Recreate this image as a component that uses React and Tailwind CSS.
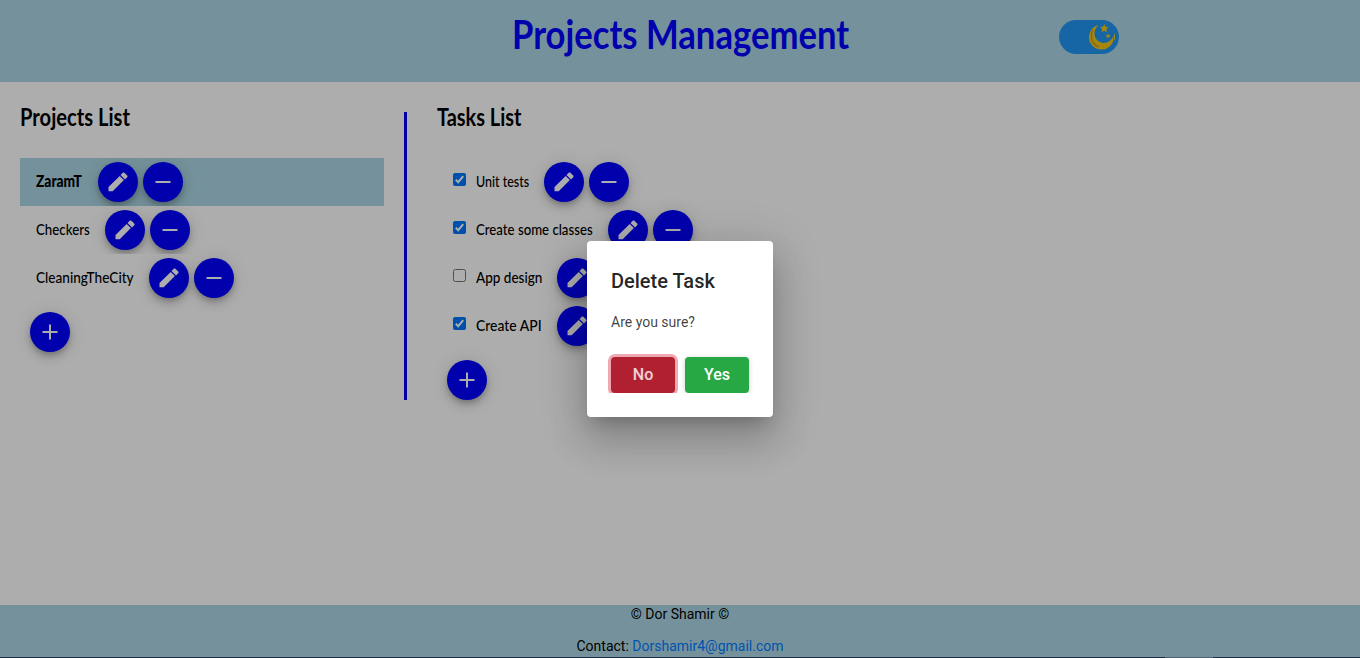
import React from "react";

const display = "font-['Lato','Open_Sans',sans-serif]";

function Fab({ icon }) {
  const paths = {
    edit: "M2.500 17.100V21.300h4.200L17.900 10.100l-4.200-4.200L2.500 17.100zM21.200 7.300c.5-.5.5-1.200 0-1.700l-2.800-2.800c-.5-.5-1.200-.5-1.700 0L14.500 5l4.500 4.500 2.200-2.200z",
    remove: "M19.500 13h-15v-2h15v2z",
    add: "M19.500 13h-6.500v6.500h-2v-6.500h-6.500v-2h6.500v-6.500h2v6.500h6.500v2z",
  };
  return (
    <button className="flex size-10 shrink-0 items-center justify-center rounded-full bg-[#0000ff] text-white shadow-[0_3px_5px_-1px_rgba(0,0,0,0.2),0_6px_10px_0_rgba(0,0,0,0.14),0_1px_18px_0_rgba(0,0,0,0.12)]">
      <svg viewBox="0 0 24 24" className="size-6 fill-current">
        <path d={paths[icon]} />
      </svg>
    </button>
  );
}

function Check({ on }) {
  return on ? (
    <span className="mb-[5px] mr-[10px] flex size-[13px] shrink-0 items-center justify-center rounded-[2px] bg-[#0075ff]">
      <svg viewBox="0 0 13 13" className="size-[13px]">
        <path d="M2.800 6.800 5.200 9.200 10.200 3.200" fill="none" stroke="#fff" strokeWidth="2" />
      </svg>
    </span>
  ) : (
    <span className="mb-[5px] mr-[10px] size-[13px] shrink-0 rounded-[2.5px] border border-[#767676] bg-white" />
  );
}

function Row({ label, width, squeeze, className = "", checked }) {
  return (
    <li className={"flex h-12 items-center pl-4 " + className}>
      {checked !== undefined && <Check on={checked} />}
      <span className={"shrink-0 whitespace-nowrap pb-[2px] " + width}>
        <span className={"inline-block origin-left " + squeeze}>{label}</span>
      </span>
      <span className="flex gap-[5px]">
        <Fab icon="edit" />
        <Fab icon="remove" />
      </span>
    </li>
  );
}

function ThemeToggle() {
  return (
    <div className="ml-[210px] mt-5 h-[34px] w-[60px] overflow-hidden rounded-full bg-[#2196f3]">
      <svg viewBox="0 0 60 34" className="h-[34px] w-[60px]">
        <path d="M39.500 5C31 7 27.500 17 32 24c4.800 7 15 7.400 20 1 2.100-2.500 2.900-5 2.300-8.500-2.800 5.600-9 8-14 5.300-6.200-3.400-6.500-11.600-.8-16.800z" fill="#f5c816" />
        <path d="M34 10c-3.500 7-1 14.500 6 17" fill="none" stroke="#c99a10" strokeWidth="1.500" />
        <path d="m45.300 4 1.200 2.700 3 .3-2.100 2.100.6 3-2.700-1.400-2.700 1.400.6-3L41.100 7l3-.3zM49 13.500l.8 1.500 1.700.2-1.200 1.200.3 1.700-1.600-.8-1.500.8.3-1.700-1.200-1.200 1.700-.2zM56 13l-1.600 4 1.600 4zM39 27h3l-1.500 2.500zM44 27h3l-1.500 2.500z" fill="#f5c816" />
      </svg>
    </div>
  );
}

export default function App() {
  return (
    <div className="grid h-[658px] w-[1360px] overflow-hidden bg-white text-black">
      <div className="col-start-1 row-start-1 flex h-[658px] flex-col font-['Roboto',sans-serif]">
        <header className="flex h-[82px] shrink-0 bg-[#add8e6]">
          <h1 className={"ml-[512px] mt-[10px] h-12 w-[337px] whitespace-nowrap text-[40px] leading-[48px] font-bold text-[#0000ff] " + display}>
            <span className="inline-block origin-left scale-x-[0.866]">Projects Management</span>
          </h1>
          <ThemeToggle />
        </header>

        <main className={"flex h-[523px] shrink-0 pl-5 pt-[30px] text-[16px] font-medium " + display}>
          <section className="h-[288px] w-[387px] border-r-[3px] border-[#0000ff] pr-5">
            <h2 className="-mt-[9px] h-[55px] text-[24px] leading-[28px] font-bold">
              <span className="inline-block origin-left scale-x-[0.84]">Projects List</span>
            </h2>
            <ul>
              <Row label="ZaramT" width="w-[62px] font-black" squeeze="scale-x-[0.86]" className="overflow-hidden bg-[#add8e6]" />
              <Row label="Checkers" width="w-[69px]" squeeze="scale-x-[0.83]" className="overflow-hidden" />
              <Row label="CleaningTheCity" width="w-[113px]" squeeze="scale-x-[0.85]" />
            </ul>
            <div className="pl-[10px] pt-[10px]">
              <Fab icon="add" />
            </div>
          </section>
          <section className="w-[400px] pl-[30px]">
            <h2 className="-mt-[9px] h-[55px] text-[24px] leading-[28px] font-bold">
              <span className="inline-block origin-left scale-x-[0.83]">Tasks List</span>
            </h2>
            <ul>
              <Row checked={true} label="Unit tests" width="w-[68px]" squeeze="scale-x-[0.78]" />
              <Row checked={true} label="Create some classes" width="w-[132px]" squeeze="scale-x-[0.825]" />
              <Row checked={false} label="App design" width="w-[81px]" squeeze="scale-x-[0.845]" />
              <Row checked={true} label="Create API" width="w-[81px]" squeeze="scale-x-[0.87]" />
            </ul>
            <div className="pl-[10px] pt-[10px]">
              <Fab icon="add" />
            </div>
          </section>
        </main>

        <footer className="flex h-[53px] shrink-0 flex-col bg-[#add8e6] text-center text-[14px] leading-5">
          <p className="-mt-px mb-3">© Dor Shamir ©</p>
          <p className="mb-px h-5">
            Contact: <a className="text-[#007bff]">Dorshamir4@gmail.com</a>
          </p>
          <div className="h-px shrink-0 bg-[#25466a] pl-[1165px]">
            <div className="h-px w-12 bg-[#7890a8]" />
          </div>
        </footer>
      </div>

      <div className="z-10 col-start-1 row-start-1 flex items-center justify-center bg-black/32 font-['Roboto',sans-serif]">
        <div className="h-[176px] w-[186px] rounded bg-white p-6 shadow-[0_11px_15px_-7px_rgba(0,0,0,0.2),0_24px_38px_3px_rgba(0,0,0,0.14),0_9px_46px_8px_rgba(0,0,0,0.12)]">
          <h3 className="text-[20px] leading-8 font-medium text-black/87">Delete Task</h3>
          <p className="mt-4 text-[14px] leading-[18px] text-black/75">Are you sure?</p>
          <div className="-mx-6 mt-[17px] flex h-[45px] gap-[10px] overflow-hidden px-6 pt-[9px]">
            <button className="h-9 w-16 rounded bg-[#b02030] text-[16px] font-medium text-white/80 shadow-[0_0_0_3px_#f0a8b0]">No</button>
            <button className="h-9 w-16 rounded bg-[#28a745] text-[16px] font-medium text-white shadow-[0_1px_5px_rgba(0,0,0,0.2)]">Yes</button>
          </div>
        </div>
      </div>
    </div>
  );
}
